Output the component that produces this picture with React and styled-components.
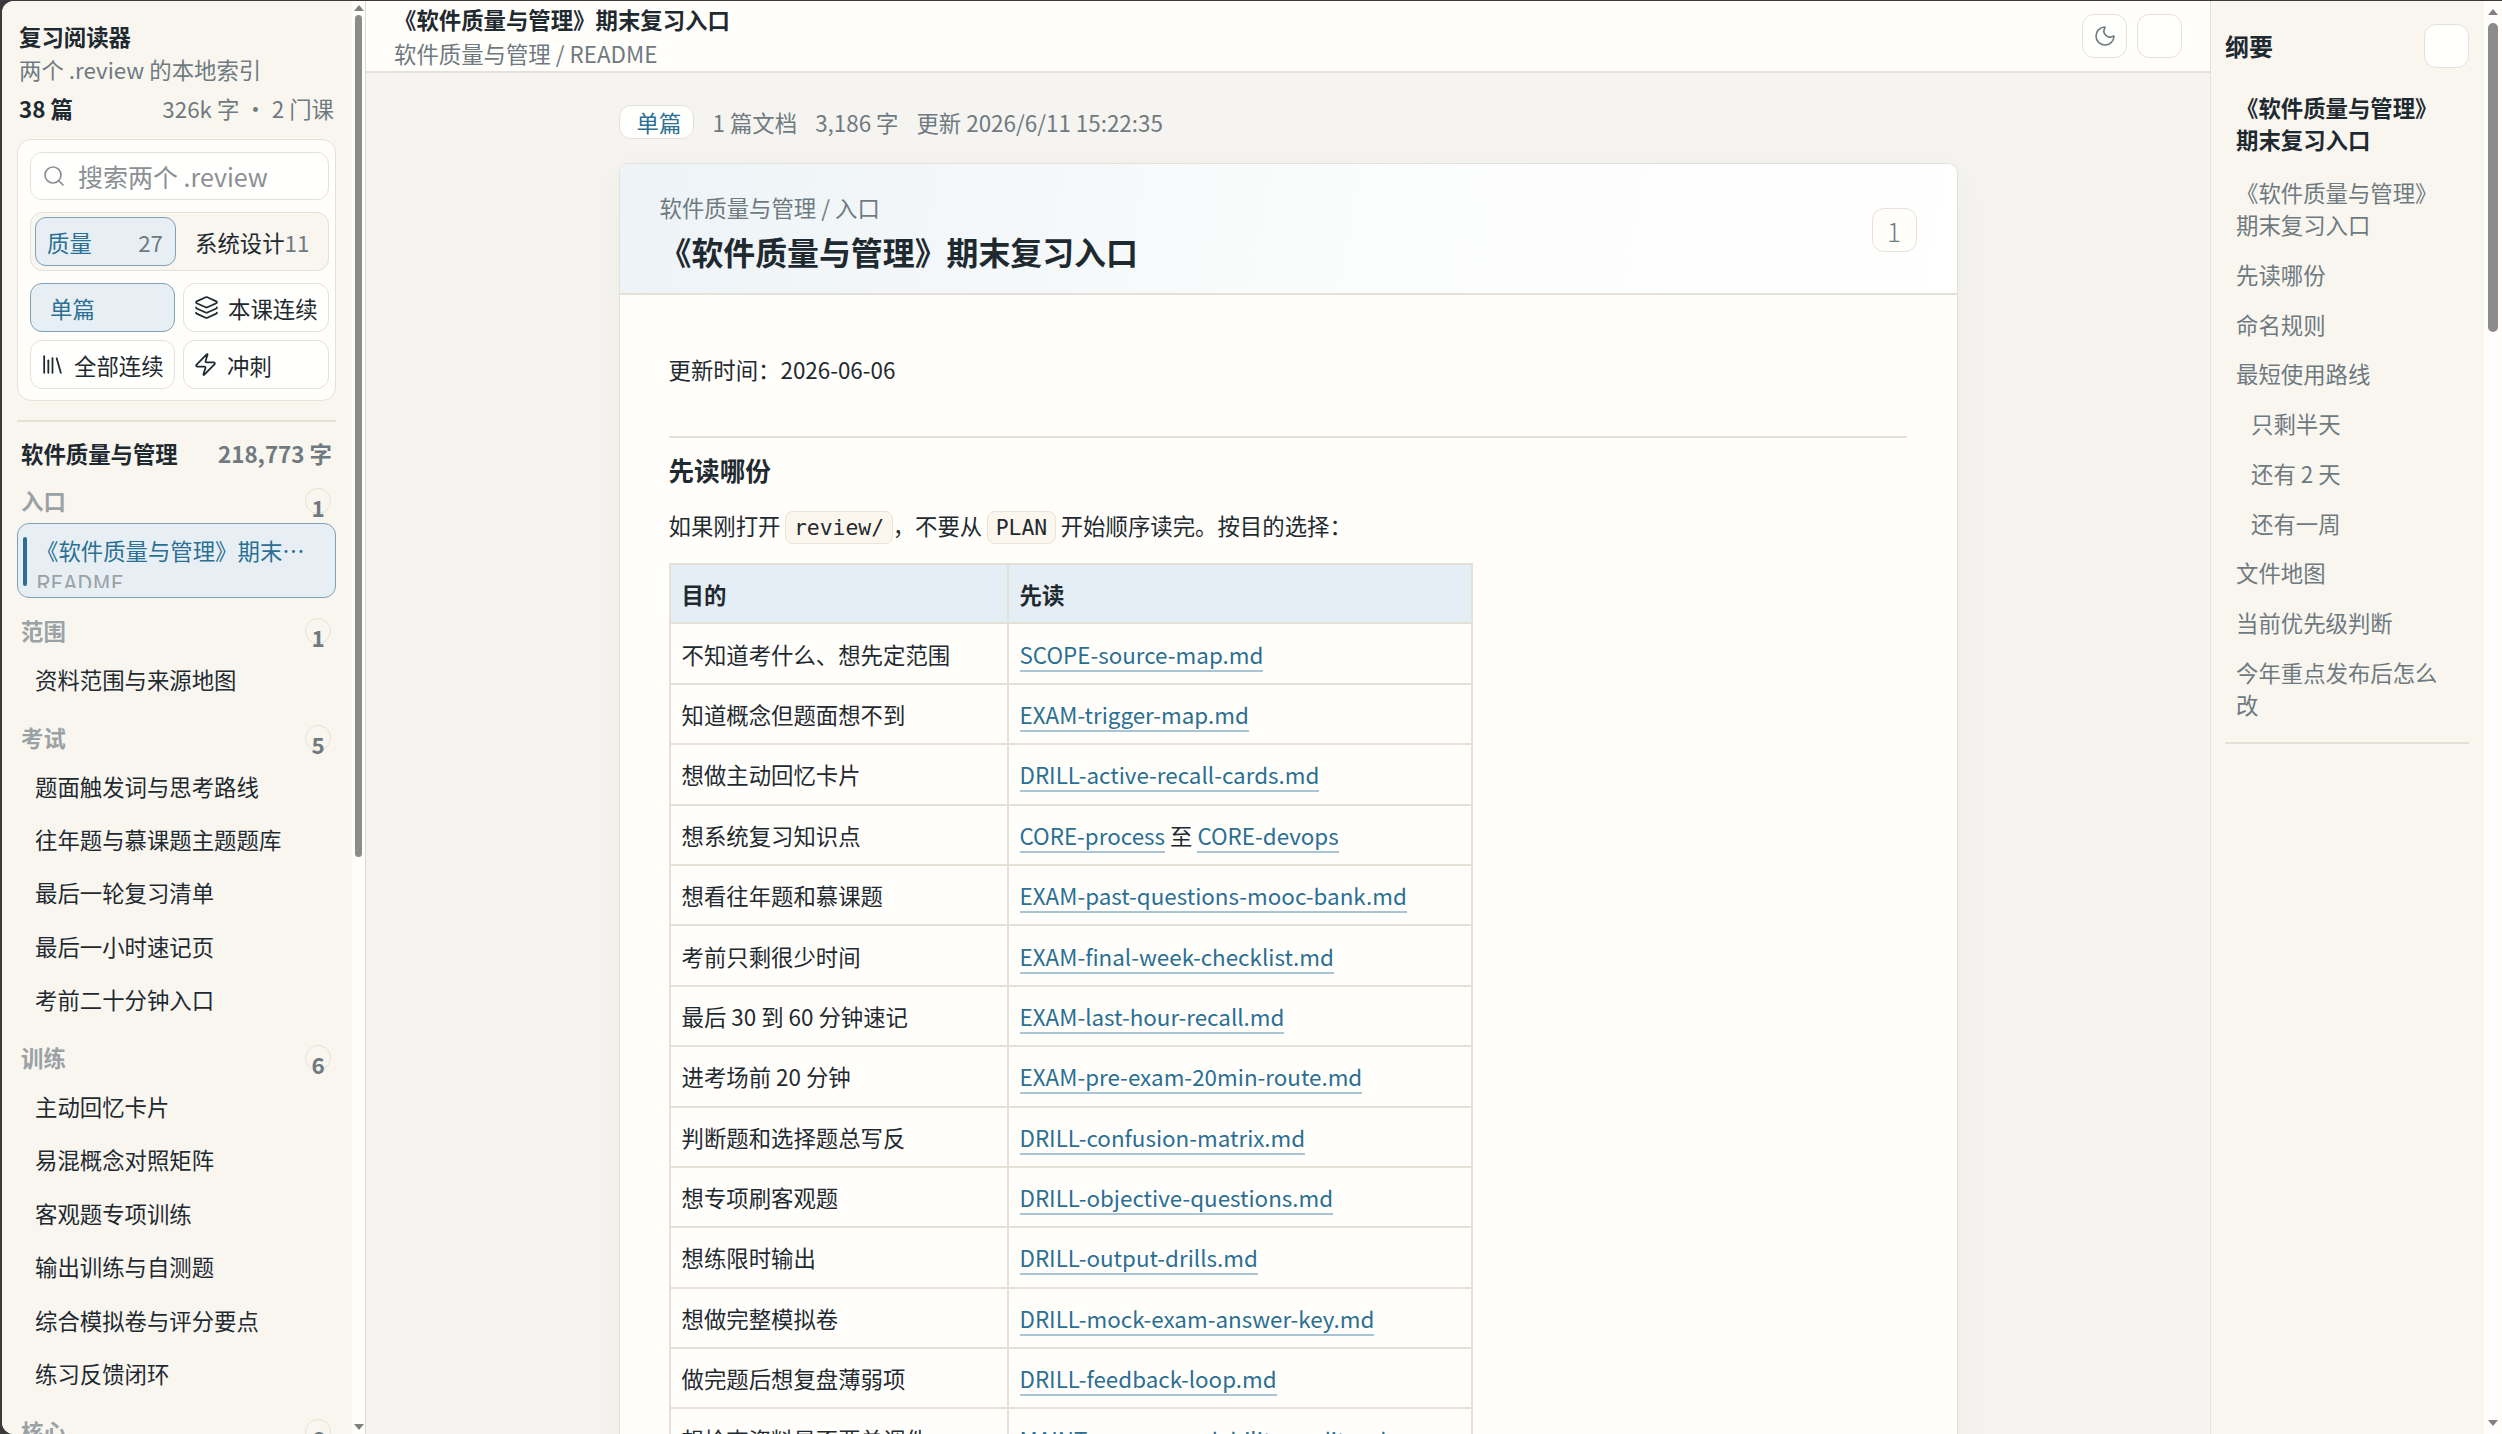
import React from 'react'
import styled, { createGlobalStyle } from 'styled-components'
import { Search, Layers, Library, Zap, Moon } from 'lucide-react'

const ink = '#1f2a30'
const muted = '#6f7a80'
const faint = '#9aa2a6'
const line = '#e4e1d8'
const accent = '#2b6f93'
const accentBg = '#e7eff5'
const accentLine = '#7fa2b6'
const paper = '#fffefb'
const sand = '#f9f6f0'

const GlobalStyle = createGlobalStyle`
    html, body {
        margin: 0;
        height: 100%;
        overflow: hidden;
        background: #3a3a3a;
    }
    body {
        font-family: "Noto Sans CJK SC", "Noto Sans", sans-serif;
        font-size: 22.4px;
        color: ${ink};
    }
    * {
        box-sizing: border-box;
    }
`

const Window = styled.div`
    height: 100vh;
    padding: 1px 0 0 2px;
`

const Shell = styled.div`
    display: flex;
    height: 100%;
    overflow: hidden;
    border-radius: 12px 0 0 12px;
    background: ${paper};
`

const Track = styled.div`
    flex: 0 0 ${(p) => p.$width}px;
    display: flex;
    flex-direction: column;
    align-items: center;
    height: 100%;
    background: #fffefc;
    border-right: ${(p) => (p.$divided ? `1px solid #dcdad2` : '0')};
`

const TrackGap = styled.div`
    flex: 1;
`

const Arrow = styled.div`
    flex: 0 0 ${(p) => p.$size}px;
    display: flex;
    align-items: center;
    justify-content: center;
    &::after {
        content: "";
        border-left: 5px solid transparent;
        border-right: 5px solid transparent;
        border-${(p) => (p.$down ? 'top' : 'bottom')}: 6px solid #808080;
    }
`

const Thumb = styled.div`
    flex: 0 0 ${(p) => p.$height}px;
    width: ${(p) => p.$width}px;
    border-radius: ${(p) => p.$width / 2}px;
    background: #8c8c8c;
`

const SidePane = styled.aside`
    flex: 0 0 350px;
    height: 100%;
    overflow: hidden;
    padding: 19px 16px 0 15px;
    background: ${sand};
`

const AppTitle = styled.div`
    padding-left: 2px;
    font-weight: 700;
    line-height: 33px;
`

const AppSub = styled.div`
    padding-left: 2px;
    color: ${muted};
    line-height: 33px;
`

const Stats = styled.div`
    display: flex;
    justify-content: space-between;
    margin-top: 6px;
    padding: 0 2px;
    line-height: 33px;
    b {
        font-weight: 700;
    }
    span {
        color: ${muted};
    }
`

const ControlCard = styled.div`
    display: flex;
    flex-direction: column;
    gap: 12px;
    height: 262px;
    margin-top: 14px;
    padding: 12px 6px 0 12px;
    background: ${paper};
    border: 1px solid ${line};
    border-radius: 14px;
`

const SearchBox = styled.div`
    display: flex;
    align-items: center;
    gap: 12px;
    height: 48px;
    flex: none;
    padding-left: 11px;
    background: #fffffd;
    border: 1px solid ${line};
    border-radius: 12px;
    color: #8b9094;
    font-size: 25px;
    svg {
        flex: none;
    }
`

const Segment = styled.div`
    display: grid;
    grid-template-columns: 141px 1fr;
    flex: none;
    height: 59px;
    padding: 4px;
    background: ${sand};
    border: 1px solid ${line};
    border-radius: 12px;
`

const SegmentTab = styled.div`
    display: flex;
    align-items: center;
    justify-content: space-between;
    padding: 0 ${(p) => (p.$active ? '12px' : '14px')} 0 ${(p) => (p.$active ? '11px' : '18px')};
    border-radius: 11px;
    border: 1px solid ${(p) => (p.$active ? accentLine : 'transparent')};
    background: ${(p) => (p.$active ? accentBg : 'transparent')};
    color: ${(p) => (p.$active ? accent : ink)};
    white-space: nowrap;
    span {
        color: ${muted};
    }
`

const ModeGrid = styled.div`
    display: grid;
    grid-template-columns: 145px 146px;
    grid-auto-rows: 49px;
    gap: 8px;
`

const ModeButton = styled.div`
    display: flex;
    align-items: center;
    gap: 9px;
    padding-left: ${(p) => p.$pad || 9}px;
    border-radius: 12px;
    border: 1px solid ${(p) => (p.$active ? accentLine : line)};
    background: ${(p) => (p.$active ? accentBg : '#fffffd')};
    color: ${(p) => (p.$active ? accent : ink)};
    svg {
        flex: none;
    }
`

const Divider = styled.div`
    height: 2px;
    margin: 19px 0 12px;
    background: ${line};
`

const CourseRow = styled.div`
    display: flex;
    justify-content: space-between;
    height: 38px;
    margin-bottom: 7px;
    padding: 0 4px;
    font-weight: 700;
    line-height: 38px;
    span {
        color: ${muted};
    }
`

const Group = styled.section`
    margin-bottom: 9.3px;
`

const GroupHead = styled.div`
    display: flex;
    align-items: center;
    justify-content: space-between;
    height: 44px;
    padding: 0 5px 2px 4px;
    color: ${faint};
    font-weight: 700;
`

const Count = styled.span`
    width: 26px;
    height: 26px;
    margin-top: 2px;
    border: 1px solid ${line};
    border-radius: 50%;
    color: ${muted};
    line-height: 36px;
    text-align: center;
`

const Item = styled.div`
    height: 53.4px;
    padding-left: 18px;
    line-height: 53.4px;
`

const ActiveItem = styled.div`
    position: relative;
    height: 75px;
    padding: 9px 25px 0 18px;
    background: ${accentBg};
    border: 1px solid ${accentLine};
    border-radius: 12px;
    margin-bottom: 11px;
    &::before {
        content: "";
        position: absolute;
        left: 5px;
        top: 13px;
        width: 4px;
        height: 49px;
        border-radius: 2px;
        background: ${accent};
    }
`

const ActiveClip = styled.div`
    height: 55px;
    overflow: hidden;
`

const ActiveTitle = styled.div`
    overflow: hidden;
    color: ${accent};
    line-height: 34px;
    white-space: nowrap;
    text-overflow: ellipsis;
`

const ActiveSub = styled.div`
    color: ${faint};
    line-height: 31px;
`

const Main = styled.main`
    flex: 0 0 1844px;
    height: 100%;
    overflow: hidden;
    background: #f5f4f0;
`

const TopBar = styled.header`
    display: flex;
    align-items: center;
    justify-content: space-between;
    height: 72px;
    padding: 0 28px 0 28px;
    background: ${paper};
    border-bottom: 2px solid ${line};
`

const TopTitle = styled.div`
    font-weight: 700;
    line-height: 34px;
`

const TopSub = styled.div`
    color: ${muted};
    line-height: 34px;
`

const TopActions = styled.div`
    display: flex;
    gap: 10px;
`

const IconButton = styled.div`
    display: flex;
    align-items: center;
    justify-content: center;
    width: 45px;
    height: 44px;
    color: ${muted};
    background: #fffffd;
    border: 1px solid ${line};
    border-radius: 12px;
`

const Content = styled.div`
    width: 1339px;
    margin: 0 auto;
    padding-top: 32px;
`

const MetaRow = styled.div`
    display: flex;
    align-items: center;
    gap: 18px;
    height: 34px;
    margin-bottom: 24px;
    color: ${muted};
`

const Pill = styled.span`
    width: 75px;
    height: 34px;
    margin-right: 1px;
    padding-left: 17px;
    color: ${accent};
    background: #fffffd;
    border: 1px solid ${line};
    border-radius: 12px;
    line-height: 32px;
`

const DocCard = styled.article`
    background: ${paper};
    border: 1px solid ${line};
    border-radius: 10px;
    box-shadow: 0 10px 40px rgba(60, 50, 30, 0.05);
`

const DocHead = styled.div`
    display: flex;
    align-items: center;
    justify-content: space-between;
    height: 131px;
    padding: 6px 40px 0;
    background: linear-gradient(100deg, #edf3f7 0%, #fbfcfc 55%, #ffffff 100%);
    border-bottom: 2px solid ${line};
    border-radius: 10px 10px 0 0;
`

const Crumb = styled.div`
    color: ${muted};
    line-height: 33px;
`

const DocTitle = styled.h1`
    margin: 5px 0 0;
    font-size: 31.9px;
    font-weight: 700;
    line-height: 44px;
`

const PageBadge = styled.div`
    width: 45px;
    height: 44px;
    margin-top: -3px;
    color: ${muted};
    background: ${paper};
    border: 1px solid ${line};
    border-radius: 12px;
    font-size: 26px;
    font-weight: 300;
    line-height: 44px;
    text-align: center;
`

const Article = styled.div`
    padding: 58px 50px 0 49px;
`

const Para = styled.p`
    margin: 0;
    line-height: 33px;
`

const Rule = styled.hr`
    height: 2px;
    margin: 50px 0 14px;
    border: 0;
    background: ${line};
`

const H2 = styled.h2`
    margin: 0 0 21px;
    font-size: 25.6px;
    font-weight: 700;
    line-height: 36px;
`

const Code = styled.code`
    padding: 3px 7.5px;
    font-family: "DejaVu Sans Mono", monospace;
    font-size: 21.4px;
    background: #fdf6ee;
    border: 1px solid #eae3d8;
    border-radius: 8px;
`

const Table = styled.table`
    width: 804px;
    margin-top: 19px;
    border-collapse: collapse;
    table-layout: fixed;
    th, td {
        height: 60.4px;
        padding: 0 11px;
        border: 2px solid ${line};
        text-align: left;
    }
    th {
        height: 59.4px;
        font-weight: 700;
        background: #e6eef5;
    }
`

const GoalCol = styled.col`
    width: 338px;
`

const DocLink = styled.a`
    color: ${accent};
    border-bottom: 2px solid #a9c4d4;
`

const Outline = styled.nav`
    flex: 0 0 274px;
    height: 100%;
    background: ${sand};
    border-left: 1px solid ${line};
`

const OutlineHead = styled.div`
    display: flex;
    align-items: center;
    justify-content: space-between;
    height: 66px;
    margin-top: 12px;
    padding: 0 15px 0 14px;
    font-size: 24px;
    font-weight: 700;
    span {
        margin-top: -2px;
    }
`

const OutlineList = styled.div`
    margin: 0 15px 0 14px;
    padding: 3px 0 13px;
    border-bottom: 2px solid ${line};
`

const OutlineItem = styled.div`
    padding: 8.7px 20px 9px ${(p) => (p.$sub ? 26 : 11)}px;
    margin-bottom: ${(p) => (p.$tall ? 4 : 0)}px;
    color: ${(p) => (p.$bold ? ink : muted)};
    font-weight: ${(p) => (p.$bold ? 700 : 400)};
    line-height: 32px;
`

const groups = [
    { name: '范围', count: 1, items: ['资料范围与来源地图'] },
    { name: '考试', count: 5, items: ['题面触发词与思考路线', '往年题与慕课题主题题库', '最后一轮复习清单', '最后一小时速记页', '考前二十分钟入口'] },
    { name: '训练', count: 6, items: ['主动回忆卡片', '易混概念对照矩阵', '客观题专项训练', '输出训练与自测题', '综合模拟卷与评分要点', '练习反馈闭环'] },
    { name: '核心', count: 6, items: [] },
]

const rows = [
    ['不知道考什么、想先定范围', ['SCOPE-source-map.md']],
    ['知道概念但题面想不到', ['EXAM-trigger-map.md']],
    ['想做主动回忆卡片', ['DRILL-active-recall-cards.md']],
    ['想系统复习知识点', ['CORE-process', 'CORE-devops']],
    ['想看往年题和慕课题', ['EXAM-past-questions-mooc-bank.md']],
    ['考前只剩很少时间', ['EXAM-final-week-checklist.md']],
    ['最后 30 到 60 分钟速记', ['EXAM-last-hour-recall.md']],
    ['进考场前 20 分钟', ['EXAM-pre-exam-20min-route.md']],
    ['判断题和选择题总写反', ['DRILL-confusion-matrix.md']],
    ['想专项刷客观题', ['DRILL-objective-questions.md']],
    ['想练限时输出', ['DRILL-output-drills.md']],
    ['想做完整模拟卷', ['DRILL-mock-exam-answer-key.md']],
    ['做完题后想复盘薄弱项', ['DRILL-feedback-loop.md']],
    ['想检查资料是否要单调件', ['MAINT-source-readability-audit.md']],
]

const outline = [
    { text: '《软件质量与管理》期末复习入口', bold: true, tall: true },
    { text: '《软件质量与管理》期末复习入口' },
    { text: '先读哪份' },
    { text: '命名规则' },
    { text: '最短使用路线' },
    { text: '只剩半天', sub: true },
    { text: '还有 2 天', sub: true },
    { text: '还有一周', sub: true },
    { text: '文件地图' },
    { text: '当前优先级判断' },
    { text: '今年重点发布后怎么改' },
]

const FakeScrollbar = ({ width, thumbWidth, thumbHeight, arrow, divided }) => {
    return <Track $width={width} $divided={divided}>
        <Arrow $size={arrow} />
        <Thumb $width={thumbWidth} $height={thumbHeight} />
        <TrackGap />
        <Arrow $size={arrow} $down />
    </Track>
}

const App = () => {
    return <Window>
        <GlobalStyle />
        <Shell>
            <SidePane>
                <AppTitle>复习阅读器</AppTitle>
                <AppSub>两个 .review 的本地索引</AppSub>
                <Stats>
                    <b>38 篇</b>
                    <span>326k 字 ・ 2 门课</span>
                </Stats>
                <ControlCard>
                    <SearchBox>
                        <Search size={24} strokeWidth={1.7} />
                        搜索两个 .review
                    </SearchBox>
                    <Segment>
                        <SegmentTab $active>质量<span>27</span></SegmentTab>
                        <SegmentTab>系统设计<span>11</span></SegmentTab>
                    </Segment>
                    <ModeGrid>
                        <ModeButton $active $pad={19}>单篇</ModeButton>
                        <ModeButton $pad={10}><Layers size={25} strokeWidth={1.7} />本课连续</ModeButton>
                        <ModeButton><Library size={25} strokeWidth={1.7} />全部连续</ModeButton>
                        <ModeButton><Zap size={25} strokeWidth={1.7} />冲刺</ModeButton>
                    </ModeGrid>
                </ControlCard>
                <Divider />
                <CourseRow>软件质量与管理<span>218,773 字</span></CourseRow>
                <GroupHead>入口<Count>1</Count></GroupHead>
                <ActiveItem>
                    <ActiveClip>
                        <ActiveTitle>《软件质量与管理》期末复习入口</ActiveTitle>
                        <ActiveSub>README</ActiveSub>
                    </ActiveClip>
                </ActiveItem>
                {groups.map((g) => (
                    <Group key={g.name}>
                        <GroupHead>{g.name}<Count>{g.count}</Count></GroupHead>
                        {g.items.map((text) => <Item key={text}>{text}</Item>)}
                    </Group>
                ))}
            </SidePane>
            <FakeScrollbar width={14} thumbWidth={7} thumbHeight={842} arrow={14} divided />
            <Main>
                <TopBar>
                    <div>
                        <TopTitle>《软件质量与管理》期末复习入口</TopTitle>
                        <TopSub>软件质量与管理 / README</TopSub>
                    </div>
                    <TopActions>
                        <IconButton><Moon size={24} strokeWidth={1.6} /></IconButton>
                        <IconButton />
                    </TopActions>
                </TopBar>
                <Content>
                    <MetaRow>
                        <Pill>单篇</Pill>
                        <span>1 篇文档</span>
                        <span>3,186 字</span>
                        <span>更新 2026/6/11 15:22:35</span>
                    </MetaRow>
                    <DocCard>
                        <DocHead>
                            <div>
                                <Crumb>软件质量与管理 / 入口</Crumb>
                                <DocTitle>《软件质量与管理》期末复习入口</DocTitle>
                            </div>
                            <PageBadge>1</PageBadge>
                        </DocHead>
                        <Article>
                            <Para>更新时间：2026-06-06</Para>
                            <Rule />
                            <H2>先读哪份</H2>
                            <Para>如果刚打开 <Code>review/</Code>，不要从 <Code>PLAN</Code> 开始顺序读完。按目的选择：</Para>
                            <Table>
                                <colgroup>
                                    <GoalCol />
                                    <col />
                                </colgroup>
                                <thead>
                                    <tr><th>目的</th><th>先读</th></tr>
                                </thead>
                                <tbody>
                                    {rows.map(([goal, links]) => (
                                        <tr key={goal}>
                                            <td>{goal}</td>
                                            <td>
                                                <DocLink>{links[0]}</DocLink>
                                                {links[1] && <> 至 <DocLink>{links[1]}</DocLink></>}
                                            </td>
                                        </tr>
                                    ))}
                                </tbody>
                            </Table>
                        </Article>
                    </DocCard>
                </Content>
            </Main>
            <Outline>
                <OutlineHead><span>纲要</span><IconButton /></OutlineHead>
                <OutlineList>
                    {outline.map((o, i) => (
                        <OutlineItem key={i} $bold={o.bold} $sub={o.sub} $tall={o.tall}>{o.text}</OutlineItem>
                    ))}
                </OutlineList>
            </Outline>
            <FakeScrollbar width={18} thumbWidth={10} thumbHeight={309} arrow={22} />
        </Shell>
    </Window>
}

export default App
